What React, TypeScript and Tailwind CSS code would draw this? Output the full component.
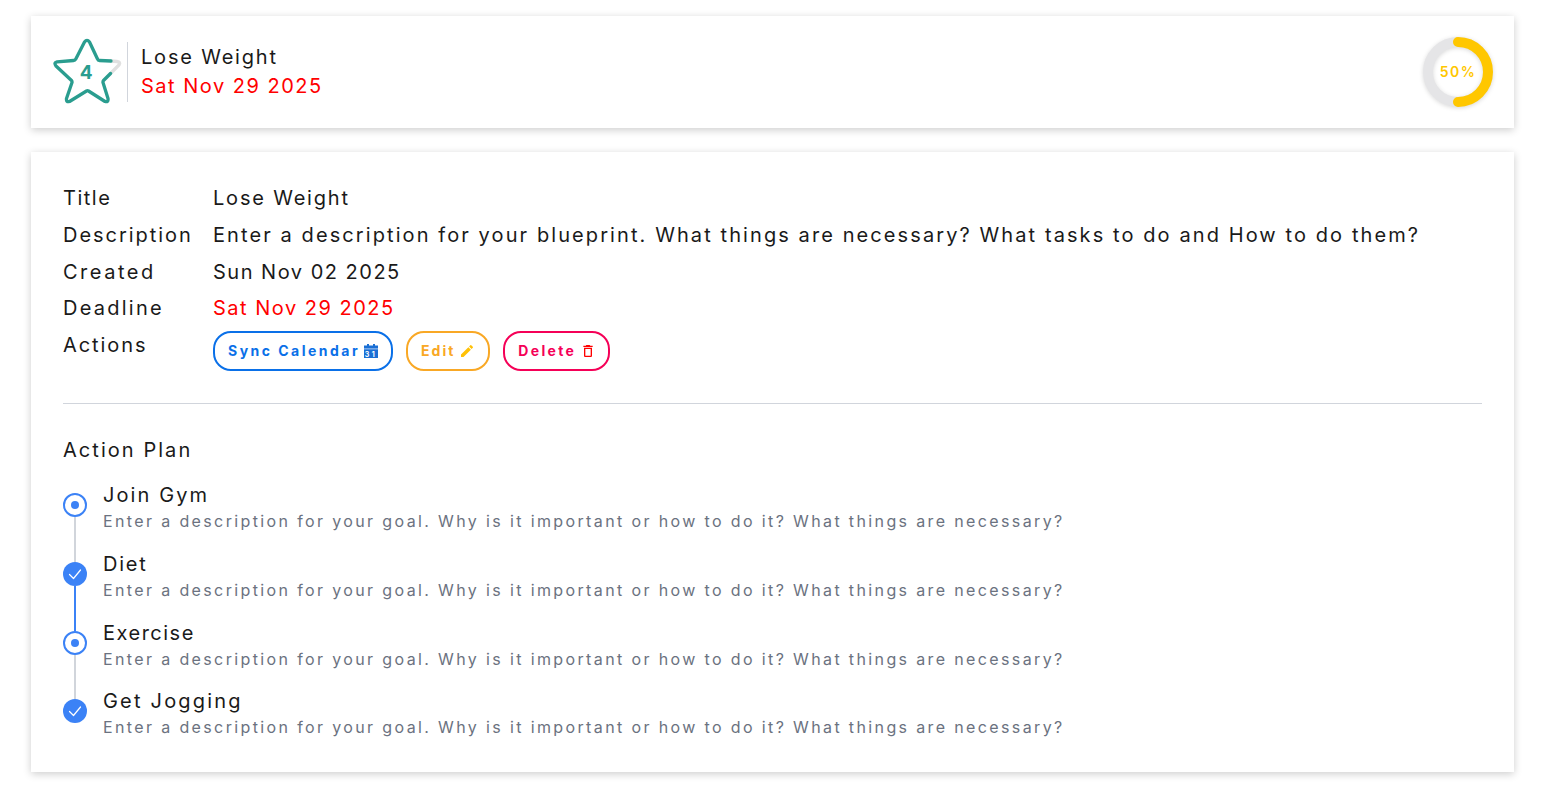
import React from "react";

const steps = [
  { title: "Join Gym", tr: "tracking-[2.1px]", done: false, before: "bg-transparent", after: "bg-[#d1d5db]" },
  { title: "Diet", tr: "tracking-[1.75px]", done: true, before: "bg-[#d1d5db]", after: "bg-[#3b82f6]" },
  { title: "Exercise", tr: "tracking-[1.5px]", done: false, before: "bg-[#3b82f6]", after: "bg-[#d1d5db]" },
  { title: "Get Jogging", tr: "tracking-[2.2px]", done: true, before: "bg-[#d1d5db]", after: "bg-transparent" },
];

const desc = "Enter a description for your goal. Why is it important or how to do it? What things are necessary?";

function Star() {
  return (
    <svg width="70" height="70" viewBox="53 37 70 70" fill="none" strokeWidth="3.300" strokeLinecap="round" className="shrink-0">
      <path d="M111 61 L117 61.500 Q121 62 119 65 L110.500 73.500" stroke="#e0e0e0" />
      <path
        d="M110.500 73.500 L103.500 80.500 Q102.800 81.200 103 82.500 L108 98.500 Q108.500 102.500 105 101.500 L88.500 91 Q87.500 90.400 86.500 91 L69.500 101.500 Q66 102.500 66.500 98.500 L72 82.500 Q72.200 81.200 71.500 80.500 L56 66 Q53.500 62.500 57 61.800 L73.500 60.500 Q75 60.500 75.800 59 L84.500 42 Q87 38.800 89.500 42 L97.500 59 Q98 60.500 99.500 60.500 L111 61"
        stroke="#2a9d8f"
        strokeLinejoin="round"
      />
      <text x="87" y="79" textAnchor="middle" fontSize="19" fontWeight="700" fill="#2a9d8f" stroke="none" fontFamily="Inter, sans-serif">4</text>
    </svg>
  );
}

function Donut() {
  return (
    <div className="relative w-[70px] h-[70px] shrink-0">
      <svg width="70" height="70" viewBox="0 0 70 70" fill="none" className="drop-shadow-sm">
        <circle cx="35" cy="35" r="30" stroke="#e5e5e7" strokeWidth="10" />
        <path d="M35 5 A30 30 0 0 1 35 65" stroke="#ffc700" strokeWidth="10" strokeLinecap="round" />
      </svg>
      <div className="absolute inset-0 flex items-center justify-center pb-0.5 text-[14px] font-semibold tracking-[1.5px] text-[#ffc700]">50%</div>
    </div>
  );
}

function CalendarIcon() {
  return (
    <svg width="14" height="14" viewBox="0 0 14 14" className="shrink-0">
      <rect x="0" y="1.500" width="14" height="12.500" fill="#1a6fd4" />
      <rect x="3" y="0" width="2" height="3" fill="#1a6fd4" />
      <rect x="9" y="0" width="2" height="3" fill="#1a6fd4" />
      <rect x="0" y="4.500" width="14" height="0.800" fill="#cfe2fa" />
      <text x="7" y="12.500" textAnchor="middle" fontSize="7" fontWeight="700" fill="#fff" fontFamily="Inter, sans-serif">31</text>
    </svg>
  );
}

function PencilIcon() {
  return (
    <svg width="16" height="16" viewBox="0 0 24 24" className="shrink-0">
      <path fill="#ffc107" d="M3 17.250V21h3.750L17.810 9.940l-3.750-3.750L3 17.250zM20.710 7.040a1 1 0 0 0 0-1.410l-2.340-2.340a1 1 0 0 0-1.410 0l-1.830 1.830 3.750 3.750 1.830-1.830z" />
    </svg>
  );
}

function TrashIcon() {
  return (
    <svg width="16" height="16" viewBox="0 0 24 24" className="shrink-0">
      <path fill="#ff0000" d="M16 9v10H8V9h8m-1.500-6h-5l-1 1H5v2h14V4h-3.500l-1-1zM18 7H6v12c0 1.100.9 2 2 2h8c1.100 0 2-.9 2-2V7z" />
    </svg>
  );
}

function Btn({ children, cls }: { children: React.ReactNode; cls: string }) {
  return (
    <div className={"h-10 pl-[13px] flex items-center gap-[4px] rounded-[18px] border-2 text-[14px] font-bold " + cls}>
      {children}
    </div>
  );
}

function Row({ label, tr, children }: { label: string; tr: string; children: React.ReactNode }) {
  return (
    <div className="grid grid-cols-[150px_1fr] leading-[36.750px]">
      <div className={tr}>{label}</div>
      <div>{children}</div>
    </div>
  );
}

export default function App() {
  return (
    <div className="bg-white min-h-[789px] pt-4 pl-[31px] text-[20px] text-[#1a1a1a] tracking-[1.5px] font-['Inter',sans-serif]">
      <div className="w-[1483px] h-[112px] bg-white shadow-[0_2px_8px_rgba(0,0,0,0.2)] flex items-center pl-[22px] pr-[21px]">
        <Star />
        <div className="w-px h-[60px] bg-gray-300 ml-1 mr-[13px]" />
        <div className="flex-1">
          <div className="leading-[29px] tracking-[1.8px]">Lose Weight</div>
          <div className="leading-[29px] text-[#ff0000]">Sat Nov 29 2025</div>
        </div>
        <Donut />
      </div>

      <div className="w-[1483px] h-[620px] mt-6 bg-white shadow-[0_2px_8px_rgba(0,0,0,0.2)] pt-7 px-8">
        <Row label="Title" tr="tracking-[1.5px]"><span className="tracking-[1.8px]">Lose Weight</span></Row>
        <Row label="Description" tr="tracking-[1.95px]"><span className="tracking-[2.09px]">Enter a description for your blueprint. What things are necessary? What tasks to do and How to do them?</span></Row>
        <Row label="Created" tr="tracking-[2.5px]">Sun Nov 02 2025</Row>
        <Row label="Deadline" tr="tracking-[2.25px]"><span className="text-[#ff0000] tracking-[1.5px]">Sat Nov 29 2025</span></Row>
        <Row label="Actions" tr="tracking-[1.93px]">
          <div className="flex gap-[13px] mt-1">
            <Btn cls="pr-[13px] tracking-[2.48px] border-[#0a70e8] text-[#0a70e8]">Sync Calendar <CalendarIcon /></Btn>
            <Btn cls="pr-[13px] tracking-[2px] border-[#f9a825] text-[#f9a825]">Edit <PencilIcon /></Btn>
            <Btn cls="pr-[12px] tracking-[2.3px] border-[#f50057] text-[#f50057]">Delete <TrashIcon /></Btn>
          </div>
        </Row>

        <div className="h-px bg-gray-300 mt-8" />

        <div className="mt-[31px] leading-[30px] tracking-[2.05px]">Action Plan</div>

        <div className="mt-[15px]">
          {steps.map((s) => (
            <div key={s.title} className="flex h-[68.750px]">
              <div className="w-6 mr-4 flex flex-col items-center">
                <div className={"h-[13px] w-0.5 " + s.before} />
                {s.done ? (
                  <div className="w-6 h-6 rounded-full bg-[#3b82f6] flex items-center justify-center">
                    <svg width="14" height="14" viewBox="0 0 14 14" fill="none" stroke="#fff" strokeWidth="1.200" strokeLinecap="round" strokeLinejoin="round"><path d="M1.500 7.500 L5.500 11.500 L12.500 3" /></svg>
                  </div>
                ) : (
                  <div className="w-6 h-6 rounded-full border-2 border-[#3b82f6] bg-white flex items-center justify-center">
                    <div className="w-2 h-2 rounded-full bg-[#3b82f6]" />
                  </div>
                )}
                <div className={"flex-1 w-0.5 " + s.after} />
              </div>
              <div>
                <div className={"leading-[30px] " + s.tr}>{s.title}</div>
                <div className="text-[16px] leading-[22.500px] tracking-[2.37px] text-[#6b7280]">{desc}</div>
              </div>
            </div>
          ))}
        </div>
      </div>
    </div>
  );
}
